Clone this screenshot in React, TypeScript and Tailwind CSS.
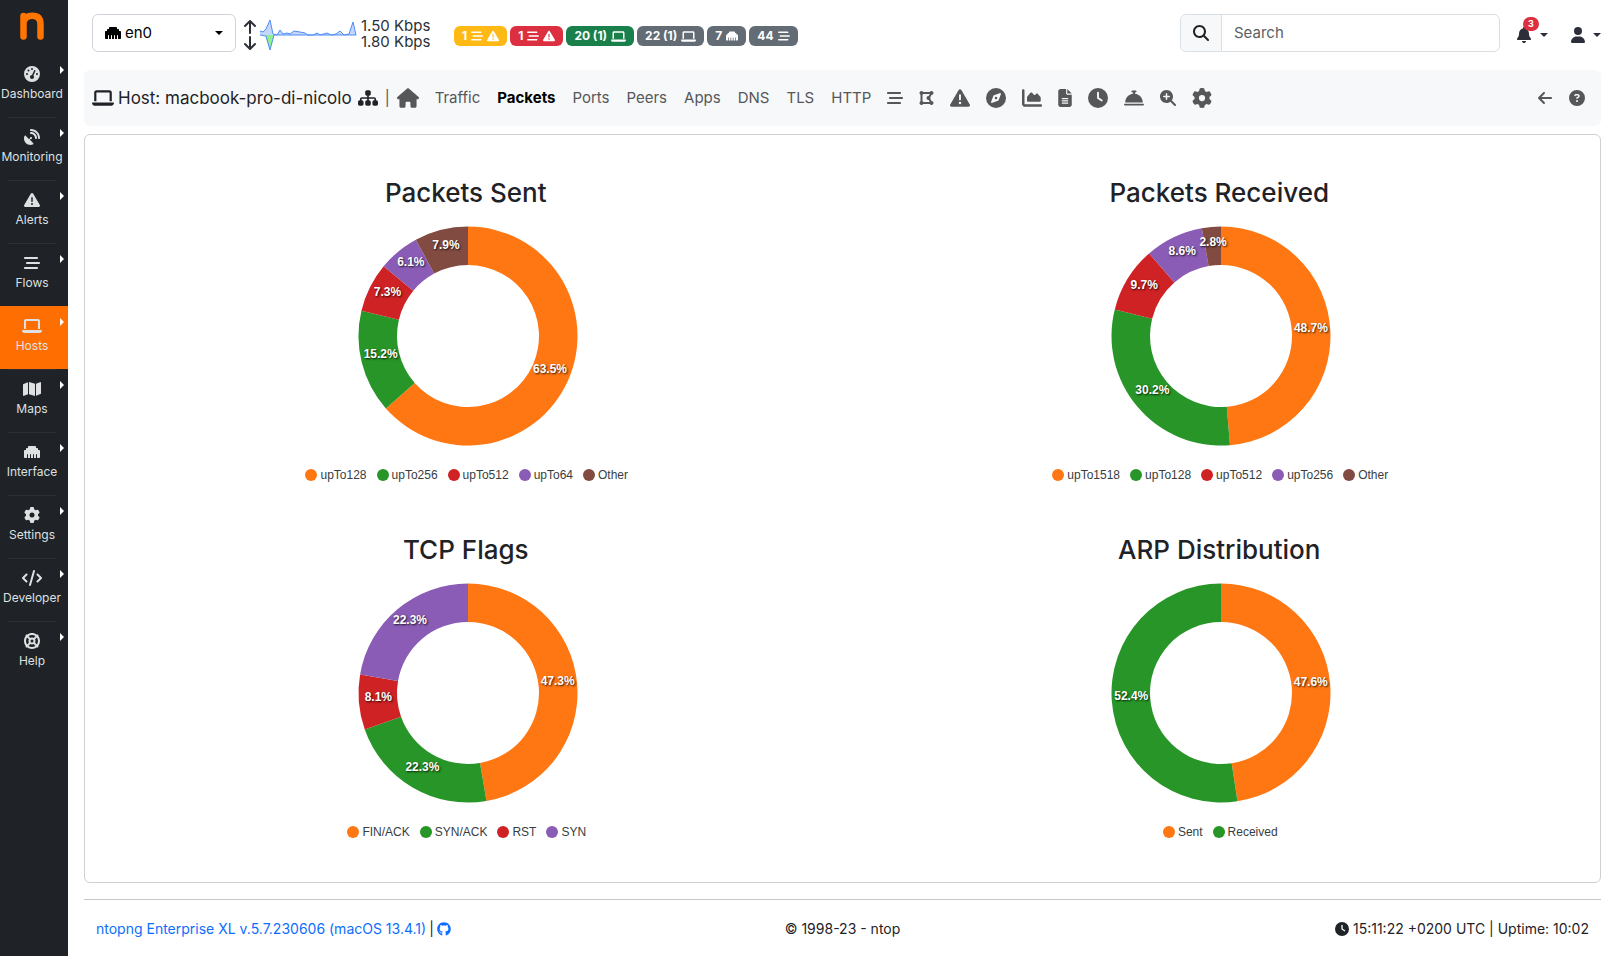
import type { ReactNode } from "react";
import type { IconType } from "react-icons";
import {
  FaArrowLeft,
  FaBarsStaggered,
  FaBell,
  FaBellConcierge,
  FaChartArea,
  FaCircleQuestion,
  FaClock,
  FaCode,
  FaCompass,
  FaDrawPolygon,
  FaEthernet,
  FaFileLines,
  FaGaugeHigh,
  FaGear,
  FaGithub,
  FaHouse,
  FaLaptop,
  FaLifeRing,
  FaMagnifyingGlass,
  FaMagnifyingGlassPlus,
  FaMap,
  FaSatelliteDish,
  FaSitemap,
  FaTriangleExclamation,
  FaUser,
} from "react-icons/fa6";

const menu: { label: string; icon: IconType; active?: boolean; wide?: boolean }[] = [
  { label: "Dashboard", icon: FaGaugeHigh },
  { label: "Monitoring", icon: FaSatelliteDish },
  { label: "Alerts", icon: FaTriangleExclamation },
  { label: "Flows", icon: FaBarsStaggered },
  { label: "Hosts", icon: FaLaptop, active: true, wide: true },
  { label: "Maps", icon: FaMap, wide: true },
  { label: "Interface", icon: FaEthernet },
  { label: "Settings", icon: FaGear },
  { label: "Developer", icon: FaCode, wide: true },
  { label: "Help", icon: FaLifeRing },
];

function Sidebar() {
  return (
    <nav aria-label="Main" className="w-[68px] shrink-0 bg-[#1f2226]">
      <a href="#home" aria-label="ntop home" className="flex h-[54px] items-start justify-center pt-3 pr-1">
        <svg width="24" height="28" viewBox="0 0 24 28" fill="none" stroke="#ff7500" strokeWidth="6.5" strokeLinecap="round" strokeLinejoin="round">
          <path d="M3.500 4V24.500M3.500 10C5 5.500 8.500 3.800 12 3.800C18 3.800 20.500 7 20.500 12V24.500" />
        </svg>
      </a>
      <ul>
        {menu.map(({ label, icon: Icon, active, wide }, i) => (
          <li key={label}>
            <a
              href={"#" + label.toLowerCase()}
              className={
                "relative flex h-[63px] flex-col items-center pt-3 pr-1 text-[12px] leading-5 text-[#dee0e2] " +
                (active ? "bg-[#ff6e00]" : "")
              }
            >
              <Icon className={wide ? "h-4 w-5" : "size-4"} />
              <span className="mt-0.5">{label}</span>
              <span className="absolute top-3 right-1 border-y-4 border-l-4 border-y-transparent border-l-white" />
              {i > 0 && <span className="absolute top-0 left-2 h-px w-12 bg-[#8888881f]" />}
            </a>
          </li>
        ))}
      </ul>
    </nav>
  );
}

function Caret() {
  return <span className="border-x-4 border-t-4 border-x-transparent border-t-current" />;
}

function Sparkline() {
  return (
    <svg width="97" height="32" viewBox="0 0 97 32" fill="none">
      <path d="M0 16V12L3 13L6 10L10 1L13 15L17 16L20 11L23 15L27 14L30 15L34 12L40 13L45 14L48 16L53 16L57 14L60 16L67 14L71 16L76 15L80 12L84 16L89 15L93 3L96 16Z" fill="#c2d7fb" />
      <path d="M5 16L10 31L14 16Z" fill="#90ee90" />
      <path d="M0 12L3 13L6 10L10 1L13 15L17 16L20 11L23 15L27 14L30 15L34 12L40 13L45 14L48 16L53 16L57 14L60 16L67 14L71 16L76 15L80 12L84 16L89 15L93 3L96 16H14L10 31L6 17L0 16" stroke="#4f8cf7" strokeLinejoin="round" />
    </svg>
  );
}

function Badge({ color, children }: { color: string; children: ReactNode }) {
  return (
    <a href="#status" className={"flex h-5 items-center gap-1 rounded-md px-2 text-[12px] font-bold text-white " + color}>
      {children}
    </a>
  );
}

function TopBar() {
  return (
    <header className="flex h-[70px] items-center pl-2">
      <button type="button" className="mb-1 flex h-[38px] w-36 items-center gap-1 rounded-md border border-[#ced4da] px-3 text-[15px] text-black">
        <FaEthernet className="size-4" />
        <span className="flex-1 text-left">en0</span>
        <Caret />
      </button>
      <div className="flex items-center text-[#2c2f36]">
        <svg width="14" height="32" viewBox="0 0 14 32" fill="none" stroke="currentColor" strokeWidth="2" strokeLinecap="round" strokeLinejoin="round" className="ml-[7px]">
          <path d="M7 14V3M2 7L7 2L12 7M7 18V29M2 25L7 30L12 25" />
        </svg>
        <span className="ml-[3px]"><Sparkline /></span>
        <div className="ml-1 w-[76px] pb-0.5 text-[15px] leading-4">
          <div>1.50 Kbps</div>
          <div>1.80 Kbps</div>
        </div>
      </div>
      <div className="mt-0.5 ml-[17px] flex gap-[3px]">
        <Badge color="bg-[#ffb914]">1<FaBarsStaggered className="size-3" /><FaTriangleExclamation className="size-3" /></Badge>
        <Badge color="bg-[#dc3040]">1<FaBarsStaggered className="size-3" /><FaTriangleExclamation className="size-3" /></Badge>
        <Badge color="bg-[#1a804b]">20 (1)<FaLaptop className="size-[15px]" /></Badge>
        <Badge color="bg-[#636b74]">22 (1)<FaLaptop className="size-[15px]" /></Badge>
        <Badge color="bg-[#636b74]">7<FaEthernet className="size-3" /></Badge>
        <Badge color="bg-[#636b74]">44<FaBarsStaggered className="size-3" /></Badge>
      </div>
      <form role="search" className="mb-1 ml-auto flex h-[38px] w-80 rounded-md border border-[#dadfe4]">
        <label htmlFor="search" aria-label="Search" className="flex w-[41px] items-center justify-center rounded-l-md border-r border-[#dadfe4] bg-[#f7f8fa] text-[#1f2226]">
          <FaMagnifyingGlass className="size-4" />
        </label>
        <input id="search" type="text" placeholder="Search" className="min-w-0 flex-1 rounded-r-md px-3 text-[15px] placeholder:text-[#5c5f62]" />
      </form>
      <button type="button" aria-label="Notifications" className="relative ml-4 flex items-center gap-2 text-[#2c2f3a]">
        <FaBell className="size-4" />
        <Caret />
        <span className="absolute -top-2.5 left-[7px] flex h-[14px] w-4 items-center justify-center rounded-full bg-[#dc3040] text-[9px] font-bold text-white">3</span>
      </button>
      <button type="button" aria-label="User" className="ml-[22px] flex items-center gap-[7px] text-[#2c2f3a]">
        <FaUser className="size-4" />
        <Caret />
      </button>
    </header>
  );
}

const tabs = ["Traffic", "Packets", "Ports", "Peers", "Apps", "DNS", "TLS", "HTTP"];

const iconTabs: { label: string; icon: IconType; size: string }[] = [
  { label: "Flows", icon: FaBarsStaggered, size: "size-4" },
  { label: "Network", icon: FaDrawPolygon, size: "h-4 w-[15px]" },
  { label: "Alerts", icon: FaTriangleExclamation, size: "size-5" },
  { label: "Explorer", icon: FaCompass, size: "size-5" },
  { label: "Timeseries", icon: FaChartArea, size: "size-5" },
  { label: "Report", icon: FaFileLines, size: "h-[18px] w-[14px]" },
  { label: "History", icon: FaClock, size: "size-5" },
  { label: "Services", icon: FaBellConcierge, size: "size-5" },
  { label: "Inspect", icon: FaMagnifyingGlassPlus, size: "size-4" },
  { label: "Host settings", icon: FaGear, size: "size-5" },
];

function HostBar() {
  return (
    <nav aria-label="Host" className="flex h-14 items-center rounded-md bg-[#f7f8fa] px-2 text-[15px] text-[#555758]">
      <div className="flex items-center text-[#1f2226]">
        <FaLaptop className="mr-1 size-[22px]" />
        <h1 className="text-[17px] leading-6">Host: macbook-pro-di-nicolo</h1>
        <a href="#map" aria-label="Host map"><FaSitemap className="ml-1.5 size-5" /></a>
      </div>
      <span className="mx-[7px]">|</span>
      <a href="#host" aria-label="Host home"><FaHouse className="size-[22px]" /></a>
      <div className="ml-4 flex gap-[17px]">
        {tabs.map((tab) => (
          <a key={tab} href={"#" + tab.toLowerCase()} className={tab === "Packets" ? "font-bold text-black" : ""}>
            {tab}
          </a>
        ))}
      </div>
      <div className="ml-4 flex items-center gap-4">
        {iconTabs.map(({ label, icon: Icon, size }) => (
          <a key={label} href="#section" aria-label={label}><Icon className={size} /></a>
        ))}
      </div>
      <div className="ml-auto flex items-center gap-4 pr-2">
        <a href="#back" aria-label="Back"><FaArrowLeft className="size-4" /></a>
        <a href="#help" aria-label="Help"><FaCircleQuestion className="size-4" /></a>
      </div>
    </nav>
  );
}

type Slice = { name: string; value: number };

const colors = ["#ff7713", "#279527", "#cf2225", "#8a5cb5", "#814b41"];

const charts: { title: string; slices: Slice[] }[] = [
  {
    title: "Packets Sent",
    slices: [
      { name: "upTo128", value: 63.5 },
      { name: "upTo256", value: 15.2 },
      { name: "upTo512", value: 7.3 },
      { name: "upTo64", value: 6.1 },
      { name: "Other", value: 7.9 },
    ],
  },
  {
    title: "Packets Received",
    slices: [
      { name: "upTo1518", value: 48.7 },
      { name: "upTo128", value: 30.2 },
      { name: "upTo512", value: 9.7 },
      { name: "upTo256", value: 8.6 },
      { name: "Other", value: 2.8 },
    ],
  },
  {
    title: "TCP Flags",
    slices: [
      { name: "FIN/ACK", value: 47.3 },
      { name: "SYN/ACK", value: 22.3 },
      { name: "RST", value: 8.1 },
      { name: "SYN", value: 22.3 },
    ],
  },
  {
    title: "ARP Distribution",
    slices: [
      { name: "Sent", value: 47.6 },
      { name: "Received", value: 52.4 },
    ],
  },
];

const OUTER = 109.5;
const INNER = 71;
const LABEL_RADIUS = 90;

function point(radius: number, fraction: number) {
  const angle = fraction * 2 * Math.PI;
  return [110 + radius * Math.sin(angle), 110 - radius * Math.cos(angle)];
}

function Donut({ title, slices }: { title: string; slices: Slice[] }) {
  const total = slices.reduce((sum, slice) => sum + slice.value, 0);
  let start = 0;
  const arcs = slices.map((slice, i) => {
    const from = start / total;
    start += slice.value;
    const to = start / total;
    const large = to - from > 0.5 ? 1 : 0;
    const [ax, ay] = point(OUTER, from);
    const [bx, by] = point(OUTER, to);
    const [cx, cy] = point(INNER, to);
    const [dx, dy] = point(INNER, from);
    const [tx, ty] = point(LABEL_RADIUS, (from + to) / 2);
    return {
      color: colors[i],
      text: slice.value.toFixed(1) + "%",
      d: `M${ax} ${ay}A${OUTER} ${OUTER} 0 ${large} 1 ${bx} ${by}L${cx} ${cy}A${INNER} ${INNER} 0 ${large} 0 ${dx} ${dy}Z`,
      tx,
      ty,
    };
  });
  return (
    <svg role="img" aria-label={title} width="220" height="220" viewBox="0 0 220 220" className="overflow-visible">
      {arcs.map((arc) => (
        <path key={arc.d} d={arc.d} fill={arc.color} />
      ))}
      {arcs.map((arc) => (
        <text
          key={arc.d}
          x={arc.tx}
          y={arc.ty}
          textAnchor="middle"
          className="fill-white font-['Liberation_Sans',sans-serif] text-[12px] font-bold [text-shadow:1px_1px_2px_rgba(0,0,0,0.8)]"
        >
          {arc.text}
        </text>
      ))}
    </svg>
  );
}

function ChartCard({ title, slices }: { title: string; slices: Slice[] }) {
  return (
    <section className="flex flex-col items-center">
      <h2 className="text-[26px] leading-[34px] font-medium text-[#1f2226]">{title}</h2>
      <div className="mt-4 ml-1"><Donut title={title} slices={slices} /></div>
      <ul className="mt-[19px] ml-0.5 flex gap-[10px] font-['Liberation_Sans',sans-serif] text-[12px] leading-5 text-[#373d3f]">
        {slices.map((slice, i) => (
          <li key={slice.name} className="flex items-center gap-[3px]">
            <span className="size-3 rounded-full" style={{ backgroundColor: colors[i] }} />
            {slice.name}
          </li>
        ))}
      </ul>
    </section>
  );
}

export default function App() {
  return (
    <div className="flex min-h-screen bg-white font-[Inter,sans-serif] text-[#1f2226]">
      <Sidebar />
      <div className="flex min-w-0 flex-1 flex-col pr-3 pl-4">
        <TopBar />
        <HostBar />
        <main className="mt-2 grid grid-cols-2 gap-y-12 rounded-md border border-[#cfd0d1] px-1 pt-[41px] pb-10">
          {charts.map((chart) => (
            <ChartCard key={chart.title} title={chart.title} slices={chart.slices} />
          ))}
        </main>
        <footer className="mt-4 grid grid-cols-3 border-t border-[#c5c7c8] px-3 pt-[17px] text-sm leading-6">
          <div className="flex items-center gap-[3px]">
            <a href="#about" className="text-[#0d6efd]">ntopng Enterprise XL v.5.7.230606 (macOS 13.4.1)</a>
            <span>|</span>
            <a href="#github" aria-label="GitHub" className="text-[#0d6efd]"><FaGithub className="size-[14px]" /></a>
          </div>
          <div className="text-center">© 1998-23 - ntop</div>
          <div className="flex items-center justify-end gap-1">
            <FaClock className="size-[14px]" />
            <span>15:11:22 +0200 UTC | Uptime: 10:02</span>
          </div>
        </footer>
      </div>
    </div>
  );
}
